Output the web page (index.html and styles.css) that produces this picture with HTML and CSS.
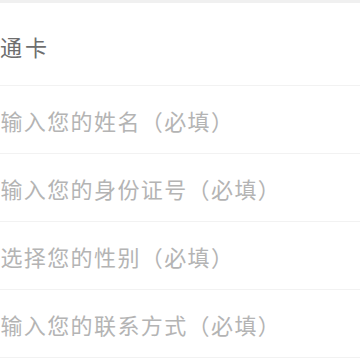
FILE: index.html
```html
<!DOCTYPE html>
<html lang="zh-CN">
<head>
<meta charset="utf-8">
<link rel="stylesheet" href="styles.css">
</head>
<body>
<div class="page">
  <div class="topbar"></div>
  <div class="row row-first"><span class="value">普通卡</span></div>
  <div class="row"><span class="ph">请输入您的姓名（必填）</span></div>
  <div class="row"><span class="ph">请输入您的身份证号（必填）</span></div>
  <div class="row"><span class="ph">请选择您的性别（必填）</span></div>
  <div class="row"><span class="ph">请输入您的联系方式（必填）</span></div>
</div>
</body>
</html>
```
FILE: styles.css
```css
html, body {
  margin: 0;
  padding: 0;
  background: #ffffff;
}
.page {
  width: 360px;
  height: 360px;
  overflow: hidden;
  font-family: "Noto Sans CJK SC", "Noto Sans", sans-serif;
}
.topbar {
  height: 3px;
  background: #f0f0f0;
}
.row {
  height: 67px;
  border-bottom: 1px solid #f2f2f2;
  display: flex;
  align-items: center;
  overflow: hidden;
  white-space: nowrap;
}
.row-first {
  height: 83px;
  padding-top: 3px;
  box-sizing: border-box;
}
.value, .ph {
  font-size: 22px;
  letter-spacing: 1.4px;
  margin-left: -23px;
  line-height: 1;
}
.value {
  margin-left: -25px;
  color: #6e6e6e;
  letter-spacing: 3px;
}
.ph {
  color: #b4b4b4;
}
```
